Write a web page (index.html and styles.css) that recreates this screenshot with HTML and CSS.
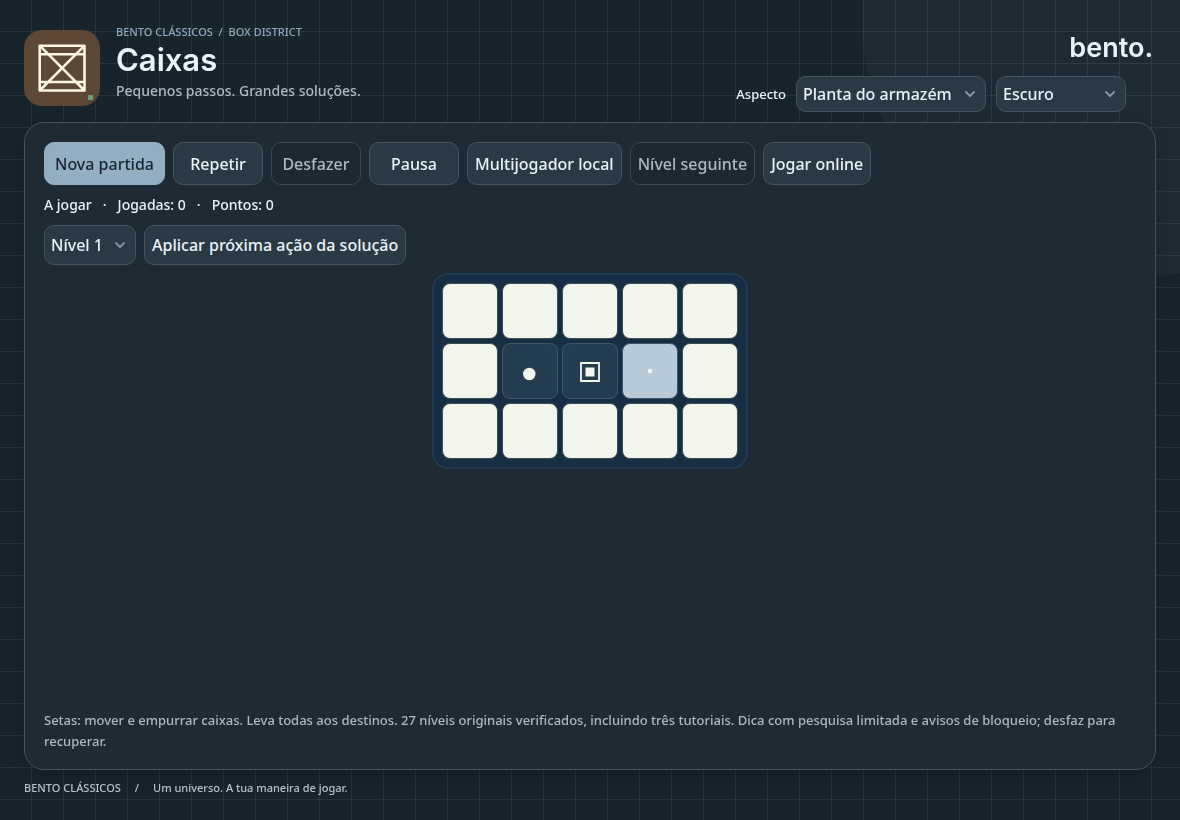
FILE: index.html
```html
<!DOCTYPE html>
<html lang="pt">
<head>
<meta charset="utf-8">
<meta name="viewport" content="width=device-width, initial-scale=1">
<title>Caixas</title>
<link rel="stylesheet" href="styles.css">
</head>
<body>
<div class="backdrop" aria-hidden="true"></div>
<div class="page">
  <header class="header">
    <svg class="app-icon" viewBox="0 0 76 76" aria-hidden="true">
      <rect width="76" height="76" rx="18" fill="#5d4836"/>
      <g fill="none" stroke="#fff5e3" stroke-width="2.6" stroke-linejoin="round">
        <rect x="15.7" y="15.7" width="44.8" height="44.8"/>
        <path d="M15.7 24.2h44.8M15.7 52h44.8M15.7 15.7l44.8 44.8M60.500 15.700l-44.800 44.800"/>
      </g>
      <rect x="64" y="65" width="5" height="5" fill="#6d9b78"/>
    </svg>
    <div class="heading">
      <p class="crumbs">BENTO CLÁSSICOS&nbsp; /&nbsp; BOX DISTRICT</p>
      <h1 class="title">Caixas</h1>
      <p class="tagline">Pequenos passos. Grandes soluções.</p>
    </div>
    <div class="header-side">
      <div class="brand">bento.</div>
      <div class="appearance">
        <label class="appearance-label" for="theme">Aspecto</label>
        <span class="picker picker-theme">
          <select id="theme"><option>Planta do armazém</option></select>
          <svg class="chevron" viewBox="0 0 12 8" aria-hidden="true"><path d="M1.500 1.500 6 6l4.500-4.500"/></svg>
        </span>
        <span class="picker picker-mode">
          <select aria-label="Modo"><option>Escuro</option></select>
          <svg class="chevron" viewBox="0 0 12 8" aria-hidden="true"><path d="M1.500 1.500 6 6l4.500-4.500"/></svg>
        </span>
      </div>
    </div>
  </header>

  <main class="panel">
    <div class="toolbar">
      <button class="btn btn-primary">Nova partida</button>
      <button class="btn">Repetir</button>
      <button class="btn" disabled>Desfazer</button>
      <button class="btn">Pausa</button>
      <button class="btn">Multijogador local</button>
      <button class="btn" disabled>Nível seguinte</button>
      <button class="btn">Jogar online</button>
    </div>
    <p class="status"><span>A jogar</span><span>·</span><span>Jogadas: 0</span><span>·</span><span>Pontos: 0</span></p>
    <div class="level-row">
      <span class="picker picker-level">
        <select aria-label="Nível"><option>Nível 1</option></select>
        <svg class="chevron" viewBox="0 0 12 8" aria-hidden="true"><path d="M1.500 1.500 6 6l4.500-4.500"/></svg>
      </span>
      <button class="btn btn-level">Aplicar próxima ação da solução</button>
    </div>
    <div class="board">
      <span class="cell wall"></span><span class="cell wall"></span><span class="cell wall"></span><span class="cell wall"></span><span class="cell wall"></span>
      <span class="cell wall"></span>
      <span class="cell"><svg viewBox="0 0 54 54"><circle cx="26.300" cy="30" r="6.200" fill="#f1f5ec"/></svg></span>
      <span class="cell"><svg viewBox="0 0 54 54"><path d="M18 19h18v18H18z" fill="none" stroke="#f1f5ec" stroke-width="1.800"/><path d="M22.500 23.500h9v9h-9z" fill="#f1f5ec"/></svg></span>
      <span class="cell goal"><svg viewBox="0 0 54 54"><rect x="25" y="25" width="4" height="4" rx="1" fill="#f1f7fc"/></svg></span>
      <span class="cell wall"></span>
      <span class="cell wall"></span><span class="cell wall"></span><span class="cell wall"></span><span class="cell wall"></span><span class="cell wall"></span>
    </div>
    <p class="help">Setas: mover e empurrar caixas. Leva todas aos destinos. 27 níveis originais verificados, incluindo três tutoriais. Dica com pesquisa limitada e avisos de bloqueio; desfaz para recuperar.</p>
  </main>

  <footer class="footer">
    <span>BENTO CLÁSSICOS</span><span>/</span><span>Um universo. A tua maneira de jogar.</span>
  </footer>
</div>
</body>
</html>
```

FILE: styles.css
```css
:root {
  --bg: #18242c;
  --surface: #1f2b34;
  --control: #2a3a44;
  --line: #45545e;
  --text: #eaf3fb;
  --muted: #adbac4;
  --accent: #94aec2;
}

* { box-sizing: border-box; }

body {
  margin: 0;
  background: var(--bg);
  color: var(--text);
  font-family: "Noto Sans", sans-serif;
  font-weight: 500;
}

p, h1 { margin: 0; }

.backdrop {
  position: fixed;
  inset: 0;
  z-index: -1;
  background:
    repeating-linear-gradient(90deg, transparent 0 31px, #ffffff12 31px 32px),
    repeating-linear-gradient(180deg, transparent 0 31px, #ffffff12 31px 32px),
    radial-gradient(circle 260px at calc(100% - 58px) 20px, var(--surface) 259px, transparent 260px);
}

.page {
  display: flex;
  flex-direction: column;
  min-height: 100vh;
  padding: 22px 24px;
}

.header {
  display: flex;
  gap: 16px;
  height: 100px;
}

.app-icon {
  flex: none;
  width: 76px;
  height: 76px;
  margin-top: 8px;
}

.heading { flex: 1; }

.crumbs {
  color: #8fa9bd;
  font-size: 11px;
  line-height: 20px;
}

.title {
  font-family: Inter, sans-serif;
  font-size: 31px;
  font-weight: 600;
  line-height: 36px;
}

.tagline {
  color: var(--muted);
  font-size: 14px;
  line-height: 26px;
}

.header-side {
  display: flex;
  flex-direction: column;
  align-items: flex-end;
}

.brand {
  padding: 8px 3px 10px 0;
  font-family: Inter, sans-serif;
  font-size: 27px;
  font-weight: 600;
  line-height: 36px;
}

.appearance {
  display: flex;
  align-items: center;
  gap: 10px;
  margin-right: 30px;
}

.appearance-label { font-size: 13px; }

.picker {
  display: grid;
  align-items: center;
  height: 36px;
}

.picker select {
  grid-area: 1 / 1;
  width: 100%;
  height: 100%;
  padding: 0 6px;
  appearance: none;
  border: 1px solid var(--line);
  border-radius: 10px;
  background: var(--control);
  color: inherit;
  font: inherit;
}

.picker-theme { width: 190px; }
.picker-mode { width: 130px; }
.picker-level { width: 92px; height: 40px; }

.chevron {
  grid-area: 1 / 1;
  justify-self: end;
  width: 12px;
  height: 8px;
  margin-right: 10px;
  fill: none;
  stroke: #87949c;
  stroke-width: 2;
  pointer-events: none;
}

.panel {
  flex: 1;
  display: flex;
  flex-direction: column;
  padding: 19px 19px 17px;
  border: 1px solid var(--line);
  border-radius: 20px;
  background: var(--surface);
  box-shadow: 0 6px 18px #00000038;
}

.toolbar, .level-row {
  display: flex;
  flex-wrap: wrap;
  gap: 8px;
}

.btn {
  min-width: 90px;
  min-height: 43px;
  padding: 0 7px;
  border: 1px solid var(--line);
  border-radius: 10px;
  background: var(--control);
  color: var(--text);
  font: inherit;
}

.btn:disabled {
  background: #1d2831;
  border-color: #3c4a54;
  color: var(--muted);
}

.btn-primary {
  padding: 0 10px;
  border-color: var(--accent);
  background: var(--accent);
  color: #18252e;
}

.btn-level { min-height: 40px; }

.status {
  display: flex;
  gap: 11px;
  padding: 8px 0;
  font-size: 14px;
  line-height: 24px;
}

.board {
  display: grid;
  grid-template-columns: repeat(5, 56px);
  grid-auto-rows: 56px;
  gap: 4px;
  align-self: center;
  margin: 8px 0 24px;
  padding: 8px;
  border: 2px solid #213c51;
  border-radius: 16px;
  background: #172f45;
}

.cell {
  border: 1px solid #415668;
  border-radius: 8px;
  background: #243c50;
}

.cell svg { display: block; }

.wall {
  border-color: #3c5059;
  background: #f1f5ec;
}

.goal {
  border-color: #3f566a;
  background: #b8cad7;
}

.help {
  margin-top: auto;
  color: var(--muted);
  font-size: 13px;
  line-height: 21px;
}

.footer {
  display: flex;
  gap: 14px;
  padding-top: 8px;
  color: #b7c3cc;
  font-size: 11px;
  line-height: 20px;
}
```
